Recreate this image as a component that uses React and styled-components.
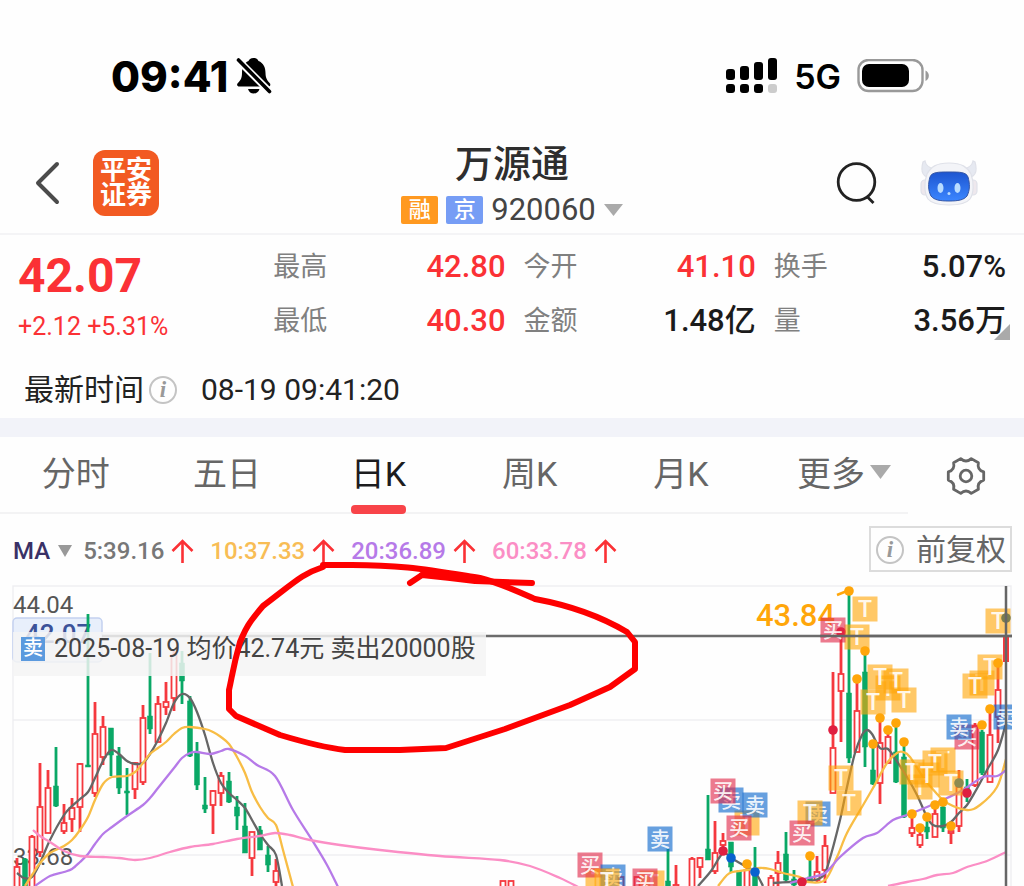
import React, { useState } from "react";
import styled, { createGlobalStyle } from "styled-components";

const GlobalStyle = createGlobalStyle`
  * {
    box-sizing: border-box;
  }
  body {
    margin: 0;
    background: #fefefe;
    color: #222;
    font-family: Roboto, "Noto Sans CJK SC", sans-serif;
  }
  button {
    border: 0;
    padding: 0;
    background: none;
    color: inherit;
    font: inherit;
    cursor: pointer;
  }
`;

const RED = "#fb3135";
const CANDLE_RED = "#f5383e";
const CANDLE_GREEN = "#0aa866";
const ORANGE = "#ffa60a";

const Page = styled.main`
  overflow: hidden;
`;

const StatusBar = styled.header`
  display: flex;
  justify-content: space-between;
  align-items: center;
  height: 132px;
  padding: 20px 94px 0 111px;
  color: #000;
  font-family: Inter, sans-serif;
`;
const StatusGroup = styled.div`
  display: flex;
  align-items: center;
  gap: ${(props) => props.$gap}px;
`;
const Clock = styled.span`
  font-size: 42px;
  font-weight: 800;
`;
const Network = styled.span`
  font-size: 34px;
  font-weight: 600;
`;

const TitleBar = styled.div`
  display: grid;
  grid-template-columns: 1fr auto 1fr;
  align-items: center;
  height: 103px;
  padding: 0 46px 0 34px;
  border-bottom: 2px solid #f4f4f6;
`;
const Side = styled.div`
  display: flex;
  align-items: center;
  justify-content: ${(props) => (props.$end ? "flex-end" : "flex-start")};
  gap: ${(props) => (props.$end ? 42 : 32)}px;
`;
const IconButton = styled.button`
  display: flex;
`;
const Logo = styled.div`
  width: 66px;
  height: 66px;
  padding: 8px 6px;
  border-radius: 12px;
  background: #f25a22;
  color: #fff;
  font-size: 26px;
  font-weight: 700;
  line-height: 25px;
  text-align: center;
`;
const StockTitle = styled.div`
  display: flex;
  flex-direction: column;
  align-items: center;
  gap: 6px;
  padding: 4px 0 0 12px;
`;
const StockName = styled.h1`
  margin: 0;
  color: #2e2e2e;
  font-size: 38px;
  font-weight: 500;
  line-height: 44px;
`;
const StockCode = styled.button`
  display: flex;
  align-items: center;
  gap: 8px;
  color: #444;
  font-size: 31px;
  line-height: 36px;
`;
const Badge = styled.span`
  width: 37px;
  height: 28px;
  border-radius: 2px;
  background: ${(props) => props.$color};
  color: #fff;
  font-size: 22px;
  font-weight: 500;
  line-height: 28px;
  text-align: center;
`;

const Quote = styled.section`
  display: grid;
  grid-template-columns: 237fr 232fr 232fr 232fr;
  gap: 0 18px;
  height: 117px;
  padding: 5px 18px 0;
`;
const PriceBlock = styled.div`
  color: ${RED};
  white-space: nowrap;
`;
const Price = styled.div`
  font-size: 48px;
  font-weight: 700;
  line-height: 72px;
`;
const Change = styled.div`
  font-size: 25px;
  line-height: 30px;
`;
const StatList = styled.dl`
  margin: 0;
`;
const Stat = styled.div`
  position: relative;
  display: flex;
  justify-content: space-between;
  align-items: center;
  height: 54px;
  line-height: 40px;
  white-space: nowrap;
`;
const StatLabel = styled.dt`
  color: #808080;
  font-size: 27px;
`;
const StatValue = styled.dd`
  margin: 0;
  color: ${(props) => (props.$up ? RED : "#1b1b1b")};
  font-size: 31px;
  font-weight: 500;
`;
const Corner = styled.span`
  position: absolute;
  right: -4px;
  bottom: 8px;
  border: 8px solid #aaa;
  border-top-color: transparent;
  border-left-color: transparent;
`;
const Latest = styled.div`
  display: flex;
  align-items: center;
  height: 66px;
  padding: 10px 24px 0;
  font-size: 30px;
  line-height: 40px;
  color: #222;
`;
const Info = styled.span`
  width: 28px;
  height: 28px;
  margin: 0 12px 0 ${(props) => (props.$tight ? 1 : 5)}px;
  border: 2px solid #c4c4c4;
  border-radius: 50%;
  color: #999;
  font: italic bold 23px/23px "Liberation Serif", serif;
  text-align: center;
`;
const LatestTime = styled.time`
  margin-left: 12px;
`;
const Divider = styled.div`
  height: 19px;
  background: #f2f3f9;
`;

const TabBar = styled.div`
  display: flex;
  height: 77px;
`;
const Tabs = styled.nav`
  display: grid;
  grid-template-columns: repeat(6, 1fr);
  flex: 1;
  border-bottom: 2px solid #f3f3f4;
`;
const Tab = styled.button`
  position: relative;
  display: flex;
  justify-content: ${(props) => (props.$more ? "flex-end" : "center")};
  align-items: center;
  gap: 5px;
  padding: ${(props) => (props.$more ? "0 17px 6px 0" : "0 0 6px")};
  color: ${(props) => (props.$active ? "#1c1c1e" : "#666")};
  font-size: 34px;
  white-space: nowrap;
  &::after {
    content: "";
    position: absolute;
    bottom: -2px;
    left: calc(50% - 27px);
    width: 55px;
    height: 9px;
    border-radius: 4px;
    background: ${(props) => (props.$active ? "#f84449" : "transparent")};
  }
`;
const Settings = styled.button`
  display: flex;
  justify-content: center;
  align-items: center;
  width: 116px;
`;

const KLine = styled.section`
  position: relative;
`;
const Averages = styled.div`
  display: flex;
  align-items: center;
  height: 71px;
  padding: 2px 12px 0 13px;
  font-size: 24px;
  font-weight: 500;
  white-space: nowrap;
`;
const Indicator = styled.button`
  display: flex;
  align-items: center;
  gap: 8px;
  margin-right: 11px;
  color: #3a3166;
`;
const Average = styled.span`
  display: flex;
  align-items: center;
  gap: 7px;
  margin-right: 16px;
  color: ${(props) => props.$color};
`;
const Adjust = styled.button`
  display: flex;
  align-items: center;
  height: 46px;
  margin: -4px 0 0 auto;
  padding: 3px 4px 0;
  border: 2px solid #dcdcdc;
  color: #666;
  font-size: 30px;
  font-weight: 400;
  line-height: 40px;
`;
const Chart = styled.svg`
  display: block;
  width: 100%;
  font-family: Roboto, "Noto Sans CJK SC", sans-serif;
`;
const Trade = styled.div`
  position: absolute;
  top: 118px;
  left: 13px;
  display: flex;
  align-items: center;
  gap: 9px;
  height: 44px;
  padding: 0 10px 10px 8px;
  background: rgba(244, 244, 244, 0.84);
  color: #444;
  font-size: 25px;
  line-height: 32px;
  white-space: nowrap;
`;
const TradeMark = styled.span`
  width: 24px;
  height: 24px;
  background: #5b9ade;
  color: #fff;
  font-size: 20px;
  font-weight: 500;
  line-height: 23px;
  text-align: center;
`;
const Scribble = styled.svg`
  position: absolute;
  top: 0;
  left: 0;
  width: 100%;
  pointer-events: none;
`;

const stats = [
  [
    { label: "最高", value: "42.80", up: true },
    { label: "最低", value: "40.30", up: true },
  ],
  [
    { label: "今开", value: "41.10", up: true },
    { label: "金额", value: "1.48亿" },
  ],
  [
    { label: "换手", value: "5.07%" },
    { label: "量", value: "3.56万", corner: true },
  ],
];

const tabs = ["分时", "五日", "日K", "周K", "月K", "更多"];

const averages = [
  { text: "5:39.16", color: "#777" },
  { text: "10:37.33", color: "#f8bd55" },
  { text: "20:36.89", color: "#b67ae8" },
  { text: "60:33.78", color: "#fb8ec5" },
];

// [x, high, low, body top, body bottom, up]
const candles = [
  [17, 273, 301, 282, 303, 1],
  [25, 273, 301, 274, 301, 0],
  [32, 250, 301, 252, 303, 1],
  [40, 178, 272, 222, 267, 1],
  [48, 185, 248, 203, 248, 1],
  [56, 162, 222, 201, 221, 0],
  [64, 219, 249, 238, 246, 1],
  [72, 213, 247, 223, 234, 1],
  [80, 178, 247, 179, 222, 1],
  [88, 29, 182, 180, 182, 0],
  [95, 117, 212, 149, 208, 1],
  [103, 131, 180, 142, 172, 1],
  [111, 143, 191, 143, 170, 0],
  [119, 162, 209, 171, 203, 0],
  [127, 183, 230, 206, 208, 0],
  [135, 177, 214, 178, 204, 1],
  [143, 120, 200, 133, 197, 1],
  [150, 68, 149, 131, 144, 0],
  [158, 111, 157, 119, 157, 1],
  [166, 97, 130, 117, 122, 1],
  [174, 66, 126, 70, 113, 1],
  [182, 66, 119, 78, 96, 0],
  [190, 111, 172, 116, 171, 0],
  [197, 157, 205, 167, 200, 0],
  [205, 192, 228, 220, 224, 0],
  [213, 205, 249, 206, 220, 1],
  [221, 187, 221, 191, 208, 1],
  [229, 187, 218, 196, 217, 0],
  [237, 211, 245, 222, 231, 0],
  [245, 218, 268, 241, 268, 0],
  [252, 247, 291, 247, 273, 1],
  [260, 241, 265, 245, 265, 0],
  [268, 261, 287, 270, 280, 0],
  [276, 274, 301, 286, 297, 1],
  [503, 296, 303, 296, 303, 1],
  [511, 296, 303, 296, 303, 1],
  [621, 292, 303, 292, 303, 1],
  [637, 292, 303, 292, 303, 1],
  [668, 264, 301, 296, 303, 0],
  [676, 280, 303, 300, 303, 1],
  [692, 272, 303, 274, 303, 1],
  [700, 272, 293, 273, 282, 1],
  [708, 210, 275, 264, 275, 0],
  [715, 236, 289, 268, 286, 1],
  [723, 248, 262, 256, 260, 1],
  [731, 257, 287, 257, 282, 0],
  [739, 285, 301, 286, 303, 0],
  [747, 283, 301, 285, 303, 1],
  [755, 262, 301, 290, 303, 0],
  [771, 290, 303, 293, 303, 1],
  [778, 266, 301, 278, 288, 1],
  [786, 247, 298, 269, 295, 0],
  [794, 285, 301, 294, 300, 0],
  [810, 275, 297, 292, 297, 0],
  [817, 271, 297, 287, 295, 1],
  [825, 250, 298, 261, 285, 1],
  [833, 87, 208, 163, 208, 1],
  [841, 45, 157, 89, 106, 1],
  [849, 4, 178, 108, 173, 0],
  [857, 95, 167, 126, 167, 1],
  [865, 67, 182, 87, 162, 0],
  [873, 160, 200, 185, 199, 0],
  [880, 135, 219, 158, 198, 1],
  [888, 142, 178, 152, 178, 1],
  [896, 135, 198, 167, 197, 0],
  [904, 157, 233, 172, 232, 0],
  [912, 228, 252, 243, 248, 1],
  [920, 240, 263, 250, 260, 1],
  [927, 233, 254, 242, 247, 0],
  [935, 223, 252, 229, 252, 1],
  [943, 215, 247, 222, 243, 0],
  [951, 240, 259, 246, 248, 1],
  [959, 185, 247, 202, 241, 1],
  [967, 194, 217, 202, 212, 0],
  [975, 138, 202, 141, 200, 1],
  [982, 145, 190, 147, 188, 0],
  [990, 123, 197, 150, 197, 1],
  [998, 82, 158, 105, 132, 1],
];

const lines = [
  {
    color: "#666",
    points: "17,288 24,293 32,292 40,278 50,255 64,230 72,221 80,214 88,207 95,193 103,176 111,165 119,169 127,176 135,179 143,178 150,169 158,155 166,138 174,118 182,109 190,113 197,127 205,150 213,178 221,198 229,208 237,215 245,223 252,235 260,249 268,260 276,270 282,301",
  },
  {
    color: "#666",
    points: "698,301 711,286 723,268 731,273 745,281 755,287 763,301",
  },
  {
    color: "#666",
    points: "773,298 790,297 803,296 815,295 823,291 828,280 840,235 847,202 855,168 862,150 867,145 872,149 880,163 888,164 896,175 907,192 917,210 927,232 933,240 943,241 951,237 959,228 967,220 975,207 987,185 998,165 1006,138",
  },
  {
    color: "#f8bd45",
    points: "25,301 32,290 40,278 50,268 64,261 72,255 80,245 88,232 95,215 103,199 112,192 127,191 135,187 143,178 150,169 158,163 166,157 174,149 182,143 190,142 205,144 213,147 221,152 229,159 237,172 245,188 252,207 260,222 268,233 276,240 283,265 293,302",
  },
  {
    color: "#f8bd45",
    points: "718,301 727,290 733,287 747,285 760,283 770,284 783,288 800,292 808,297 825,295 837,272 847,248 862,222 873,203 887,178 897,168 903,167 910,172 923,192 937,209 947,218 967,225 980,220 997,202 1006,174",
  },
  {
    color: "#b67ae8",
    points: "35,301 50,291 64,287 72,284 80,277 88,269 95,259 103,249 112,242 127,231 143,220 150,213 158,203 174,183 182,173 190,168 197,167 210,169 221,166 229,164 245,171 257,180 275,191 293,225 312,255 327,280 338,302",
  },
  {
    color: "#b67ae8",
    points: "790,298 808,293 825,288 840,272 863,253 877,248 893,235 907,230 927,222 947,213 963,205 983,192 997,191 1006,185",
  },
  {
    color: "#fb8ec5",
    points: "33,245 40,251 50,257 64,266 80,271 103,272 119,273 135,275 150,273 170,267 190,262 213,259 237,254 260,251 275,248 290,250 310,255 340,260 380,265 440,271 500,275 530,281 560,293 578,302",
  },
  {
    color: "#fb8ec5",
    points: "888,301 907,297 923,294 937,290 953,288 967,282 987,276 1006,267",
  },
];

const marks = [
  ["T", 865, 24],
  ["T", 857, 52],
  ["买", 833, 45],
  ["T", 888, 103],
  ["T", 896, 96],
  ["T", 880, 92],
  ["T", 873, 117],
  ["T", 904, 115],
  ["T", 998, 36],
  ["T", 982, 98],
  ["T", 990, 82],
  ["T", 975, 101],
  ["T", 841, 193],
  ["T", 849, 218],
  ["T", 920, 202],
  ["T", 912, 187],
  ["T", 943, 175],
  ["T", 935, 178],
  ["T", 927, 190],
  ["T", 951, 198],
  ["卖", 818, 229],
  ["T", 810, 228],
  ["T", 747, 238],
  ["买", 802, 248],
  ["买", 967, 152],
  ["卖", 959, 142],
  ["卖", 731, 215],
  ["卖", 755, 220],
  ["买", 723, 206],
  ["买", 739, 243],
  ["卖", 660, 254],
  ["T", 598, 296],
  ["T", 652, 298],
  ["买", 590, 280],
  ["卖", 613, 292],
  ["T", 607, 296],
  ["买", 645, 296],
];

const dots = [
  [849, 6],
  [865, 66],
  [857, 94],
  [880, 133],
  [888, 145],
  [896, 138],
  [873, 159],
  [904, 157],
  [912, 229],
  [920, 243],
  [927, 232],
  [935, 220],
  [943, 217],
  [951, 241],
  [998, 78],
  [990, 124],
  [982, 140],
  [810, 271],
  [747, 279],
  [833, 145, "#df1f40"],
  [967, 208, "#df1f40"],
  [723, 266, "#df1f40"],
  [802, 297, "#df1f40"],
  [731, 273, "#0862cf"],
  [755, 287, "#0862cf"],
  [959, 198, "#8c8b50"],
  [1006, 33, "#7b7d4e"],
];

const markColors = { T: "#ffa60a", 买: "#e02848", 卖: "#0a66cc" };

// Catmull-Rom through the points, written as cubic segments
function smooth(points) {
  const p = points.split(" ").map((item) => item.split(",").map(Number));
  let d = `M${p[0]}`;
  for (let i = 0; i < p.length - 1; i++) {
    const a = p[i - 1] || p[i];
    const b = p[i];
    const c = p[i + 1];
    const e = p[i + 2] || c;
    d += `C${b[0] + (c[0] - a[0]) / 6},${b[1] + (c[1] - a[1]) / 6} `;
    d += `${c[0] - (e[0] - b[0]) / 6},${c[1] - (e[1] - b[1]) / 6} ${c}`;
  }
  return d;
}

const Triangle = ({ width, height, color = "#aaa" }) => (
  <svg width={width} height={height} viewBox="0 0 20 12" preserveAspectRatio="none">
    <path d="M0 0H20L10 12Z" fill={color} />
  </svg>
);

const UpArrow = () => (
  <svg width="23" height="25" viewBox="0 0 23 25" fill="none" stroke={RED} strokeWidth="2.6">
    <path d="M11.500 25V3M1.500 13L11.500 3L21.500 13" />
  </svg>
);

const BellOff = () => (
  <svg width="36" height="38" viewBox="0 0 36 38">
    <path
      d="M17.500 1C20.500 1 22 2.500 22.500 4C27.500 6 29.500 10.500 29.500 16C29.500 22 32 24 34 26.500C34.800 28 34 29.500 32.500 29.500H3.500C1.500 29.500 .5 28 1.500 26.500C4 23.500 6 22 6 16C6 10.500 8 6 12.500 4C13 2.500 14.500 1 17.500 1Z"
      fill="#000"
    />
    <path d="M12 32H23.500C22.500 35 20.500 36.500 17.700 36.500S13 35 12 32Z" fill="#000" />
    <path d="M2 3L34 35" stroke="#fefefe" strokeWidth="7" />
    <path d="M2.500 3L33.500 34.500" stroke="#000" strokeWidth="3.600" strokeLinecap="round" />
  </svg>
);

const Signal = () => (
  <svg width="53" height="36" viewBox="0 0 53 36">
    <rect x="1" y="11" width="9" height="11" rx="3" />
    <rect x="15" y="8" width="9" height="14" rx="3" />
    <rect x="29" y="4" width="9" height="18" rx="3" />
    <rect x="43" y="0" width="9" height="22" rx="3" />
    <rect x="1" y="26" width="9" height="9" rx="3" />
    <rect x="15" y="26" width="9" height="9" rx="3" />
    <rect x="29" y="26" width="9" height="9" rx="3" />
    <rect x="43" y="26" width="9" height="9" rx="3" fill="#ccc" />
  </svg>
);

const Battery = () => (
  <svg width="73" height="34" viewBox="0 0 73 34">
    <rect x="1.500" y="1" width="64" height="31" rx="10" fill="none" stroke="#999" strokeWidth="2.400" />
    <rect x="5" y="5" width="47" height="23" rx="7" />
    <path d="M68.500 11.500C73 13.500 73 20 68.500 22Z" fill="#999" />
  </svg>
);

const Robot = () => (
  <svg width="58" height="46" viewBox="0 0 58 46">
    <defs>
      <linearGradient id="face" x1="0" y1="0" x2="0" y2="1">
        <stop offset="0" stopColor="#1d55d0" />
        <stop offset="1" stopColor="#3b86ff" />
      </linearGradient>
    </defs>
    <g fill="#f3f4f8" stroke="#dfe1e9" strokeWidth="1.200">
      <rect x="1" y="20" width="9" height="15" rx="4" fill="#eee8ed" />
      <rect x="48" y="20" width="9" height="15" rx="4" fill="#eee8ed" />
      <path d="M3 2C1 9 2 15 7 17L14 9C10 8 6 6 5 1Z" fill="#e6e9f1" />
      <path d="M55 2C57 9 56 15 51 17L44 9C48 8 52 6 53 1Z" fill="#e6e9f1" />
      <path d="M29 3C42 3 47 7 51 14C54 22 54 33 50 39C46 44 39 45 29 45S12 44 8 39C4 33 4 22 7 14C11 7 16 3 29 3Z" />
    </g>
    <path
      d="M29 12C40 12 46 12 48 17C50 24 50 30 47 36C44 40 38 41 29 41S14 40 11 36C8 30 8 24 10 17C12 12 18 12 29 12Z"
      fill="url(#face)"
      stroke="#3355a5"
    />
    <ellipse cx="20.500" cy="28" rx="3" ry="5" fill="#b9dcff" />
    <ellipse cx="37.500" cy="28" rx="3" ry="5" fill="#b9dcff" />
    <circle cx="29" cy="33.500" r="1.500" fill="#b9dcff" />
  </svg>
);

const Gear = () => (
  <svg width="40" height="40" viewBox="0 0 40 40" fill="none" stroke="#666" strokeWidth="2.800" strokeLinejoin="round">
    <path d="M37.700 24.100Q30.800 26.300 32.400 33.300L25.300 37.400Q20 32.500 14.700 37.400L7.600 33.300Q9.200 26.300 2.300 24.100V15.900Q9.200 13.700 7.600 6.700L14.700 2.600Q20 7.500 25.300 2.600L32.400 6.700Q30.800 13.700 37.700 15.900Z" />
    <circle cx="20" cy="20" r="5.800" />
  </svg>
);

const Candle = ({ data }) => {
  const [x, high, low, top, bottom, up] = data;
  const color = up ? CANDLE_RED : CANDLE_GREEN;
  return (
    <g stroke={color}>
      <path d={`M${x} ${high}V${top}M${x} ${bottom}V${low}`} strokeWidth="2.800" />
      <rect
        x={x - 2.5}
        y={top}
        width="5"
        height={Math.max(bottom - top, 1)}
        fill={up ? "#fefefe" : color}
        strokeWidth={up ? 1.8 : 0.5}
      />
    </g>
  );
};

const Mark = ({ type, x, y }) => (
  <g>
    <rect x={x - 12.5} y={y - 12.5} width="25" height="25" fill={markColors[type]} opacity="0.62" />
    <text
      x={x}
      y={y + 8}
      fill="#fff"
      fillOpacity="0.9"
      fontSize={type === "T" ? 23 : 20}
      fontWeight="500"
      textAnchor="middle"
    >
      {type}
    </text>
  </g>
);

const KChart = () => (
  <Chart viewBox="0 0 1024 301" role="img" aria-label="日K">
    <path d="M13 302V1H1011V302M13 135H1011M13 270H1011" fill="none" stroke="#efeff2" strokeWidth="1.500" />
    <rect x="13" y="33" width="89" height="44" rx="4" fill="#e8effb" stroke="#c3d1f0" strokeWidth="1.500" />
    <text x="25" y="58" fontSize="26" fontWeight="500" fill="#3c5299">
      42.07
    </text>
    <text x="13" y="28" fontSize="24" fill="#555">
      44.04
    </text>
    <text x="13" y="280" fontSize="24" fill="#555">
      33.68
    </text>
    <path d="M102 51H1012" stroke="#6c6c6c" strokeWidth="2.500" />
    {candles.map((data) => (
      <Candle key={data[0]} data={data} />
    ))}
    {lines.map((line, i) => (
      <path key={i} d={smooth(line.points)} fill="none" stroke={line.color} strokeWidth="2.300" />
    ))}
    <text x="756" y="41" fontSize="31" fontWeight="500" fill={ORANGE}>
      43.84
    </text>
    <path d="M837 10L847 6" stroke={ORANGE} strokeWidth="2.500" />
    <circle cx="841" cy="47" r="4.800" fill="#df1f40" />
    {marks.map(([type, x, y]) => (
      <Mark key={`${x}-${y}`} type={type} x={x} y={y} />
    ))}
    <svg x="0" y="0" width="1012" height="301">
      <Mark type="卖" x={1006} y={132} />
    </svg>
    {dots.map(([x, y, color]) => (
      <circle key={`${x}-${y}`} cx={x} cy={y} r="4.800" fill={color || ORANGE} />
    ))}
    <rect x="1003" y="50" width="6" height="27" fill={CANDLE_RED} />
    <path d="M820 51H1012M1006 1V302" stroke="#666" strokeWidth="2.500" />
  </Chart>
);

const App = () => {
  const [active, setActive] = useState("日K");
  return (
    <Page>
      <GlobalStyle />
      <StatusBar>
        <StatusGroup $gap={8}>
          <Clock>09:41</Clock>
          <BellOff />
        </StatusGroup>
        <StatusGroup $gap={16}>
          <Signal />
          <Network>5G</Network>
          <Battery />
        </StatusGroup>
      </StatusBar>

      <TitleBar>
        <Side>
          <IconButton aria-label="返回">
            <svg width="27" height="44" viewBox="0 0 27 44" fill="none" stroke="#4b4b4b" strokeWidth="4">
              <path d="M23 3L4 22L23 41" strokeLinecap="round" strokeLinejoin="round" />
            </svg>
          </IconButton>
          <Logo>平安证券</Logo>
        </Side>
        <StockTitle>
          <StockName>万源通</StockName>
          <StockCode>
            <Badge $color="#ff9920">融</Badge>
            <Badge $color="#769df5">京</Badge>
            920060
            <Triangle width={19} height={12} />
          </StockCode>
        </StockTitle>
        <Side $end>
          <IconButton aria-label="搜索">
            <svg width="42" height="44" viewBox="0 0 42 44" fill="none" stroke="#222" strokeWidth="2.800">
              <circle cx="20.500" cy="21" r="18.300" />
              <path d="M31 35.500L37.500 42" />
            </svg>
          </IconButton>
          <IconButton aria-label="智能助手">
            <Robot />
          </IconButton>
        </Side>
      </TitleBar>

      <Quote>
        <PriceBlock>
          <Price>42.07</Price>
          <Change>+2.12 +5.31%</Change>
        </PriceBlock>
        {stats.map((column, i) => (
          <StatList key={i}>
            {column.map((stat) => (
              <Stat key={stat.label}>
                <StatLabel>{stat.label}</StatLabel>
                <StatValue $up={stat.up}>{stat.value}</StatValue>
                {stat.corner ? <Corner /> : ""}
              </Stat>
            ))}
          </StatList>
        ))}
      </Quote>
      <Latest>
        最新时间
        <Info>i</Info>
        <LatestTime>08-19 09:41:20</LatestTime>
      </Latest>
      <Divider />

      <TabBar>
        <Tabs>
          {tabs.map((tab) => (
            <Tab
              key={tab}
              $active={tab === active}
              $more={tab === "更多"}
              onClick={() => setActive(tab)}
            >
              {tab}
              {tab === "更多" ? <Triangle width={21} height={14} /> : ""}
            </Tab>
          ))}
        </Tabs>
        <Settings aria-label="设置">
          <Gear />
        </Settings>
      </TabBar>

      <KLine>
        <Averages>
          <Indicator>
            MA
            <Triangle width={14} height={12} color="#999" />
          </Indicator>
          {averages.map((item) => (
            <Average key={item.text} $color={item.color}>
              {item.text}
              <UpArrow />
            </Average>
          ))}
          <Adjust>
            <Info $tight>i</Info>
            前复权
          </Adjust>
        </Averages>
        <KChart />
        <Trade>
          <TradeMark>卖</TradeMark>
          2025-08-19 均价42.74元 卖出20000股
        </Trade>
        <Scribble viewBox="0 0 1024 372" fill="none" stroke="#fe0000" strokeWidth="6" strokeLinecap="round" strokeLinejoin="round">
          <path d="M323 53C302 60 296 67 263 92C245 113 245 117 240 128C233 153 232 163 229 176V195L236 202L280 221Q320 233 345 236H400L446 234L505 215L570 191L610 173L635 155V128L627 118C600 102 573 92 535 85C515 76 500 69 480 64C430 56 400 50 340 51H323" />
          <path d="M410 69L422 61L450 64L475 67L532 69" />
          <path d="M422 61L445 61L480 65" />
        </Scribble>
      </KLine>
    </Page>
  );
};

export default App;
